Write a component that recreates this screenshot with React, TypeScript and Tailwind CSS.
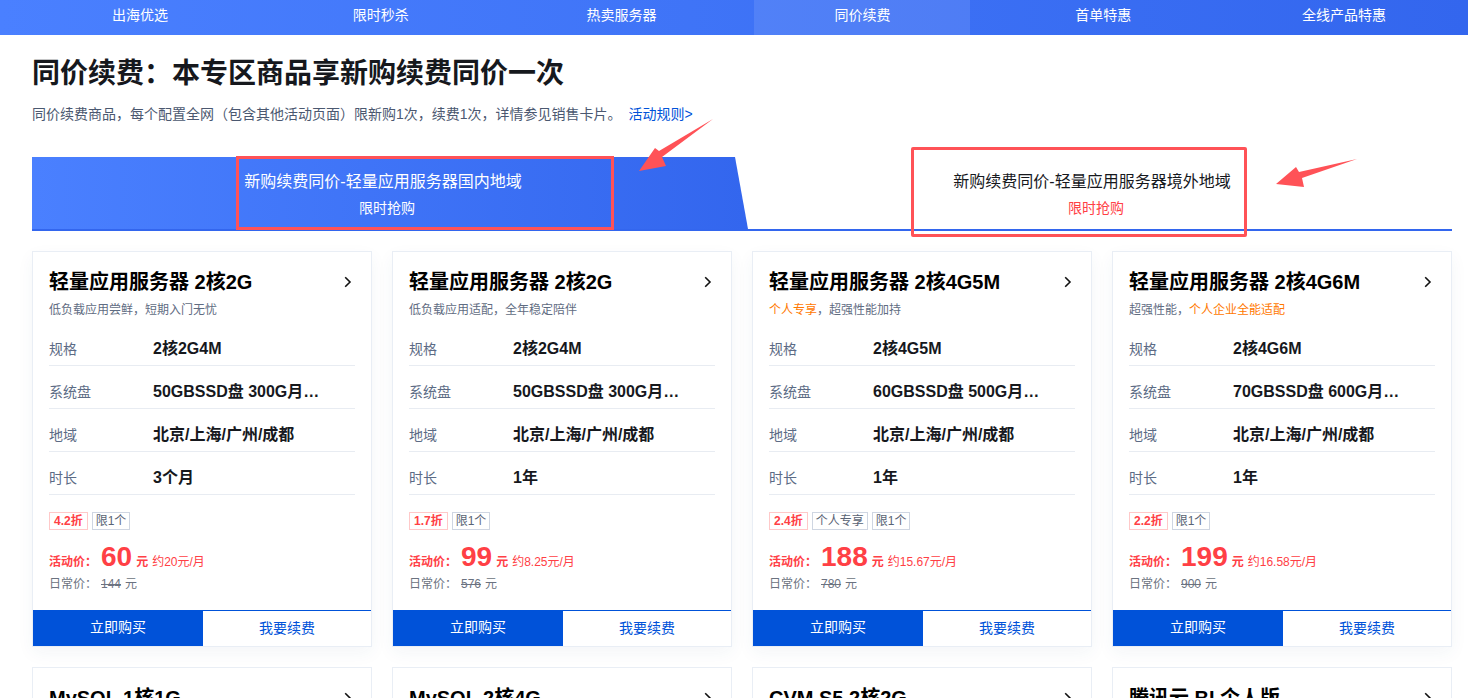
const navItems = ["出海优选", "限时秒杀", "热卖服务器", "同价续费", "首单特惠", "全线产品特惠"];

interface Product {
  title: string;
  desc: React.ReactNode;
  spec: string;
  disk: string;
  term: string;
  discount: string;
  personal?: boolean;
  price: string;
  monthly: string;
  original: string;
}

const products: Product[] = [
  {
    title: "轻量应用服务器 2核2G",
    desc: "低负载应用尝鲜，短期入门无忧",
    spec: "2核2G4M",
    disk: "50GBSSD盘 300G月…",
    term: "3个月",
    discount: "4.2折",
    price: "60",
    monthly: "约20元/月",
    original: "144",
  },
  {
    title: "轻量应用服务器 2核2G",
    desc: "低负载应用适配，全年稳定陪伴",
    spec: "2核2G4M",
    disk: "50GBSSD盘 300G月…",
    term: "1年",
    discount: "1.7折",
    price: "99",
    monthly: "约8.25元/月",
    original: "576",
  },
  {
    title: "轻量应用服务器 2核4G5M",
    desc: (
      <>
        <span className="text-[#ff7800]">个人专享</span>，超强性能加持
      </>
    ),
    spec: "2核4G5M",
    disk: "60GBSSD盘 500G月…",
    term: "1年",
    discount: "2.4折",
    personal: true,
    price: "188",
    monthly: "约15.67元/月",
    original: "780",
  },
  {
    title: "轻量应用服务器 2核4G6M",
    desc: (
      <>
        超强性能，<span className="text-[#ff7800]">个人企业全能适配</span>
      </>
    ),
    spec: "2核4G6M",
    disk: "70GBSSD盘 600G月…",
    term: "1年",
    discount: "2.2折",
    price: "199",
    monthly: "约16.58元/月",
    original: "900",
  },
];

const nextRow = ["MySQL 1核1G", "MySQL 2核4G", "CVM S5 2核2G", "腾讯云 BI 个人版"];

function Chevron() {
  return (
    <svg width="8" height="12" viewBox="0 0 8 12" fill="none" className="shrink-0">
      <path d="M1.2 1.2 L6 6 L1.2 10.8" stroke="#111" strokeWidth="1.6" />
    </svg>
  );
}

function Row({ label, value }: { label: string; value: string }) {
  return (
    <div className="flex h-[43px] items-center border-b border-[#e8ecf2] pt-[10px]">
      <span className="w-[104px] shrink-0 text-[14px] text-[#5c6b85]">{label}</span>
      <span className="whitespace-nowrap text-[16px] font-bold text-[#16181d]">{value}</span>
    </div>
  );
}

function Tag({ children, red }: { children: React.ReactNode; red?: boolean }) {
  return (
    <span
      className={`flex h-[18px] items-center border text-[12px] ${
        red ? "border-[#ffc9c9] px-[4px] font-bold text-[#ff4045]" : "border-[#cfd6e2] px-[3px] text-[#5a6475]"
      }`}
    >
      {children}
    </span>
  );
}

function ProductCard({ item }: { item: Product }) {
  return (
    <div className="flex h-[396px] flex-col border border-[#e9eef5] bg-white shadow-[0_6px_16px_rgba(40,70,120,0.05)]">
      <div className="flex-1 px-4 pt-[15px]">
        <div className="flex h-[30px] items-center justify-between pr-[3px]">
          <h3 className="text-[20px] font-bold text-black">{item.title}</h3>
          <Chevron />
        </div>
        <p className="mt-[5px] h-[17px] text-[12px] leading-[17px] text-[#5f6c82]">{item.desc}</p>
        <div className="mt-[4px]">
          <Row label="规格" value={item.spec} />
          <Row label="系统盘" value={item.disk} />
          <Row label="地域" value="北京/上海/广州/成都" />
          <Row label="时长" value={item.term} />
        </div>
        <div className="mt-[17px] flex gap-[4px]">
          <Tag red>{item.discount}</Tag>
          {item.personal && <Tag>个人专享</Tag>}
          <Tag>限1个</Tag>
        </div>
        <div className="mt-[11px] flex h-[32px] items-baseline text-[#ff4045]">
          <span className="w-[52px] shrink-0 text-[12px] font-bold">活动价：</span>
          <span className="text-[28px] font-bold leading-[32px]">{item.price}</span>
          <span className="ml-[4px] text-[12px] font-bold">元</span>
          <span className="ml-[4px] text-[12px]">{item.monthly}</span>
        </div>
        <div className="mt-[2px] flex h-[17px] items-center text-[12px] text-[#6b7280]">
          <span className="w-[52px] shrink-0">日常价：</span>
          <span className="line-through">{item.original}</span>
          <span className="ml-[4px]">元</span>
        </div>
      </div>
      <div className="flex h-[36px] border-t border-[#0052d9]">
        <button className="w-[170px] bg-[#0052d9] pb-[3px] text-[14px] text-white">立即购买</button>
        <button className="flex-1 bg-white text-[14px] text-[#0052d9]">我要续费</button>
      </div>
    </div>
  );
}

function Annotations() {
  return (
    <>
      <div className="absolute left-[236px] top-[156px] h-[74px] w-[378px] border-[3px] border-[#ff5257]" />
      <div className="absolute left-[911px] top-[147px] h-[90px] w-[336px] rounded-[2px] border-[3px] border-[#ff5257]" />
      <svg className="pointer-events-none absolute left-0 top-0" width="1468" height="698" fill="#ff5257">
        <polygon points="713,119 662,157 666,166 639,171 655,148 659,151" />
        <polygon points="1357,159 1299,172 1296,167 1276,184 1304,187 1302,178" />
      </svg>
    </>
  );
}

export default function App() {
  return (
    <div
      className="relative h-[698px] overflow-hidden bg-white"
      style={{ fontFamily: '"Liberation Sans", "Noto Sans CJK SC", sans-serif' }}
    >
      <nav className="h-[35px] bg-gradient-to-r from-[#4a80ff] to-[#3366ee]">
        <div className="ml-[32px] flex h-full w-[1420px] justify-between">
          {navItems.map((name) => (
            <a
              key={name}
              className={`flex w-[216px] items-center justify-center pb-[4px] text-[14px] text-white ${
                name === "同价续费" ? "bg-white/10" : ""
              }`}
            >
              {name}
            </a>
          ))}
        </div>
      </nav>

      <main className="ml-[32px] w-[1420px]">
        <h1 className="mt-[19px] text-[28px] font-bold leading-[40px] text-[#16181d]">
          同价续费：本专区商品享新购续费同价一次
        </h1>
        <p className="mt-[10px] text-[14px] leading-[20px] text-[#4b5870]">
          同价续费商品，每个配置全网（包含其他活动页面）限新购1次，续费1次，详情参见销售卡片。
          <a className="ml-[7px] text-[#0052d9]">活动规则&gt;</a>
        </p>

        <div className="mt-[33px] flex h-[74px] border-b-2 border-[#3366ee]">
          <div className="flex w-[716px] flex-col items-center bg-gradient-to-r from-[#4a80ff] to-[#3366ee] pr-[6px] pt-[14px] text-white [clip-path:polygon(0_0,703px_0,716px_100%,0_100%)]">
            <span className="pr-[8px] text-[16px] leading-[22px]">新购续费同价-轻量应用服务器国内地域</span>
            <span className="mt-[5px] text-[14px] leading-[20px]">限时抢购</span>
          </div>
          <div className="flex flex-1 flex-col items-center pr-[16px] pt-[14px]">
            <span className="text-[16px] leading-[22px] text-[#16181d]">新购续费同价-轻量应用服务器境外地域</span>
            <span className="mt-[5px] pl-[8px] text-[14px] leading-[20px] text-[#ff4045]">限时抢购</span>
          </div>
        </div>

        <div className="mt-[20px] grid grid-cols-4 gap-[20px]">
          {products.map((item, i) => (
            <ProductCard key={i} item={item} />
          ))}
          {nextRow.map((title) => (
            <div key={title} className="h-[396px] border border-[#e9eef5] bg-white px-4 pt-[15px]">
              <div className="flex h-[30px] items-center justify-between pr-[3px]">
                <h3 className="text-[20px] font-bold text-black">{title}</h3>
                <Chevron />
              </div>
            </div>
          ))}
        </div>
      </main>

      <Annotations />
    </div>
  );
}
